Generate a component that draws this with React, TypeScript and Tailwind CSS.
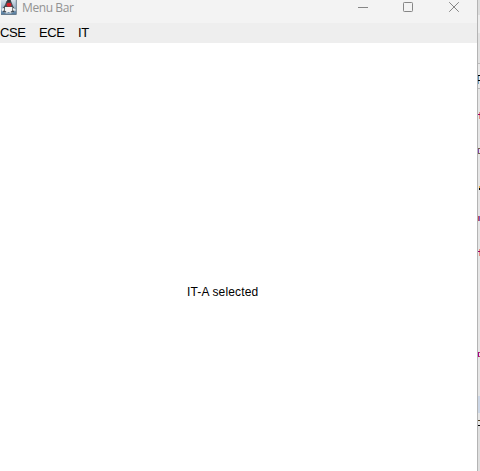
import React from "react";

function JavaIcon() {
  return (
    <svg width="17" height="16" viewBox="0 0 17 16" className="block shrink-0">
      <defs>
        <linearGradient id="tile" x1="0" y1="0" x2="0" y2="1">
          <stop offset="0" stopColor="#dfe8f0" />
          <stop offset="0.5" stopColor="#a5bacd" />
          <stop offset="1" stopColor="#557c9f" />
        </linearGradient>
      </defs>
      <rect x="1" y="-1" width="15" height="15" fill="url(#tile)" />
      <path d="M16.3 0v14.5H1" fill="none" stroke="#687c8d" />
      <path d="M6.5 1H11L13 6L14.5 8.5V11L11 12H6L2.5 11V8.5L5 5Z" fill="#454b51" />
      <path d="M5 7H12.3V10.5L10.5 12H6.5L4.7 10.5Z" fill="#f3f3f3" />
      <path d="M1.5 8.5L4 8V10.5L2 11.3ZM13 8L15.5 9V11L13 10.5Z" fill="#e9ebed" />
      <path d="M4 12.5L6.5 11.5L8.5 13L11 11.5L13 12.5L11 13.5H6Z" fill="#cbd3da" />
      <path d="M3 11.5L6 12M11 12L14 11.5" fill="none" stroke="#40474f" />
      <ellipse cx="9" cy="4.7" rx="2.5" ry="2" fill="#d81e29" />
      <path d="M7 0H11L10.5 2.3H7.5Z" fill="#34393e" />
    </svg>
  );
}

function TitleBar() {
  return (
    <header className="flex h-[23px] items-start bg-[#f3f3f3]">
      <JavaIcon />
      <h1 className="ml-[5px] mt-[-1px] flex-1 whitespace-nowrap font-['Open_Sans',sans-serif] text-[12px] leading-[18px] tracking-[-0.4px] text-[#929292]">
        Menu Bar
      </h1>
      <svg width="120" height="16" viewBox="0 0 120 16" fill="none" stroke="#868686" className="block">
        <path d="M1 7.5H11" />
        <rect x="46.5" y="2.5" width="9" height="9" rx="0.8" />
        <path d="M92.2 2.2L101.8 11.8M101.8 2.2L92.2 11.8" />
      </svg>
    </header>
  );
}

function MenuBar() {
  return (
    <nav className="flex h-5 bg-[#eeeeee] font-['Liberation_Sans',sans-serif] text-[13px] leading-5 tracking-[-0.45px] text-black">
      <span className="w-[39px]">CSE</span>
      <span className="w-[39px]">ECE</span>
      <span>IT</span>
    </nav>
  );
}

function EditorEdge() {
  return (
    <aside className="flex h-full w-[2px] flex-col overflow-hidden bg-[#e6e6e6]">
      <div className="h-[15px] shrink-0 bg-[#dddddd]" />
      <div className="h-[18px] shrink-0 bg-[#ededed]" />
      <div className="h-[30px] shrink-0 bg-[#e2e2e2]" />
      <div className="flex h-[26px] shrink-0 flex-col border-y border-[#bcbcbc] bg-[#e9e9e9]">
        <div className="mt-[11px] h-px bg-black" />
        <div className="h-[4px] w-px bg-[#5c8fb5]" />
        <div className="h-px bg-black" />
        <div className="h-[3px] w-px bg-[#6d9cc0]" />
      </div>
      <div className="mt-[23px] h-[9px] shrink-0">
        <div className="ml-px h-[2px] bg-[#e58a80]" />
        <div className="h-px bg-[#a00065]" />
        <div className="ml-px h-[4px] bg-[#e58a80]" />
      </div>
      <div className="mt-[27px] h-[6px] shrink-0 border-y border-[#77604f]">
        <div className="h-[4px] w-px bg-[#8048a8]" />
      </div>
      <div className="mt-[32px] ml-px h-[4px] shrink-0 border-b-2 border-black bg-[#e9aa42]" />
      <div className="mt-[26px] flex h-[5px] shrink-0">
        <div className="w-px bg-[#c44b58]" />
        <div className="w-px bg-[#7d5bc0]" />
      </div>
      <div className="mt-[28px] h-[7px] shrink-0">
        <div className="ml-px h-[2px] bg-[#e58a80]" />
        <div className="h-px bg-[#a00065]" />
        <div className="ml-px h-[4px] bg-[#e58a80]" />
      </div>
      <div className="mt-[96px] flex h-[5px] shrink-0">
        <div className="w-px bg-[#a5008a]" />
        <div className="w-px border-y border-[#c0405a]" />
      </div>
      <div className="mt-[39px] h-[17px] shrink-0 bg-[#ccd6e5]" />
      <div className="mt-[7px] h-[6px] shrink-0 border-b border-black">
        <div className="h-px bg-[#53401f]" />
      </div>
      <div className="flex-1 bg-[#dfdfdf]" />
    </aside>
  );
}

export default function App() {
  return (
    <div className="flex h-[471px] w-[480px] overflow-hidden bg-[#e6e6e6]">
      <main className="flex w-[478px] flex-col border-r border-[#b4b4b4] bg-white">
        <TitleBar />
        <MenuBar />
        <p className="ml-[187px] mt-[241px] whitespace-nowrap font-['Liberation_Sans',sans-serif] text-[12px] leading-4 tracking-[0.15px] text-black">
          IT-A selected
        </p>
      </main>
      <EditorEdge />
    </div>
  );
}
